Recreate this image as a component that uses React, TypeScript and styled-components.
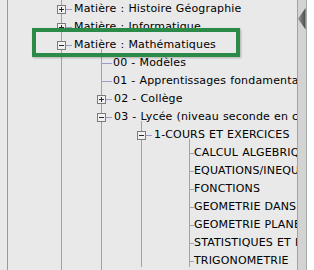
import React from 'react';
import styled, { createGlobalStyle } from 'styled-components';

const LINE = '#9d9dc8';

const Global = createGlobalStyle`
  html, body { margin: 0; padding: 0; background: #e9e9e9; }
  body { font-family: "DejaVu Sans", Verdana, sans-serif; }
`;

const Frame = styled.div`
  position: relative;
  display: flex;
  width: 314px;
  height: 270px;
  overflow: hidden;
  background: #e9e9e9;
`;

const Gutter = styled.div`
  flex: none;
  width: 7px;
`;

const Panel = styled.div`
  flex: none;
  box-sizing: border-box;
  width: 291px;
  height: 270px;
  border-left: 1px solid #9a9a9a;
  border-right: 1px solid #a2a2a2;
  overflow: hidden;
`;

const ScrollStrip = styled.div`
  flex: none;
  box-sizing: border-box;
  width: 9px;
  height: 270px;
  background: #d3d3d3;
  border-right: 1px solid #a9a9a9;
  padding-top: 8px;
`;

const WhiteEdge = styled.div`
  flex: 1;
  background: #ffffff;
`;

const Group = styled.div<{ $x: number; $cut?: number; $lift?: number }>`
  margin-top: ${(p) => -(p.$lift ?? 0)}px;
  padding-top: ${(p) => p.$lift ?? 0}px;
  background-image: linear-gradient(${LINE}, ${LINE});
  background-repeat: no-repeat;
  background-position: ${(p) => p.$x}px 0;
  background-size: 1px calc(100% - ${(p) => p.$cut ?? 0}px);
`;

const Row = styled.div<{ $indent: number }>`
  display: flex;
  align-items: center;
  height: 18px;
  padding-left: ${(p) => p.$indent}px;
  white-space: nowrap;
`;

const Toggle = styled.span`
  flex: none;
  box-sizing: border-box;
  width: 9px;
  height: 9px;
  border: 1px solid #7b7b7b;
  background: #f1f1f1;
  display: flex;
  align-items: center;
  justify-content: center;
`;

const Dash = styled.span<{ $w: number; $gap: number }>`
  flex: none;
  width: ${(p) => p.$w}px;
  height: 1px;
  margin-right: ${(p) => p.$gap}px;
  background: ${LINE};
`;

const Label = styled.span`
  font-size: 11px;
  line-height: 18px;
  letter-spacing: 0.15px;
  word-spacing: 0.4px;
  color: #000;
`;

const Highlight = styled.div`
  position: absolute;
  left: 32px;
  top: 28px;
  width: 208px;
  height: 29px;
  box-sizing: border-box;
  border: 4px solid #2b8a47;
  box-shadow: 1px 1px 2px rgba(0, 0, 0, 0.25);
  pointer-events: none;
`;

const LINE_X = [53, 93, 133, 181];

type Kind = 'plus' | 'minus' | 'leaf';

const Sign = ({ kind }: { kind: Kind }) => (
  <svg width="7" height="7" viewBox="0 0 7 7">
    <rect x="1" y="3" width="5" height="1" fill="#2a2a2a" />
    {kind === 'plus' && <rect x="3" y="1" width="1" height="5" fill="#2a2a2a" />}
  </svg>
);

const BoxRow = ({ level, kind, label }: { level: number; kind: Kind; label: string }) => (
  <Row $indent={LINE_X[level] - 4}>
    <Toggle>
      <Sign kind={kind} />
    </Toggle>
    <Dash $w={6} $gap={2} />
    <Label>{label}</Label>
  </Row>
);

const LeafRow = ({ level, label, dash, gap }: { level: number; label: string; dash: number; gap: number }) => (
  <Row $indent={LINE_X[level]}>
    <Dash $w={dash} $gap={gap} />
    <Label>{label}</Label>
  </Row>
);

const leaves = [
  'CALCUL ALGEBRIQUE',
  'EQUATIONS/INEQUATIONS',
  'FONCTIONS',
  "GEOMETRIE DANS L'ESPACE",
  'GEOMETRIE PLANE',
  'STATISTIQUES ET PROBABILITES',
  'TRIGONOMETRIE',
];

const Arrow = () => (
  <svg width="8" height="22" viewBox="0 0 8 22">
    <defs>
      <linearGradient id="arrowGrad" x1="0" y1="0" x2="1" y2="0">
        <stop offset="0" stopColor="#9a9a9a" />
        <stop offset="1" stopColor="#4a4a4a" />
      </linearGradient>
    </defs>
    <polygon points="7.5,0 7.5,21.5 0,10.75" fill="url(#arrowGrad)" />
  </svg>
);

export default function App() {
  return (
    <>
      <Global />
      <Frame>
        <Gutter />
        <Panel>
          <Group $x={LINE_X[0]}>
            <BoxRow level={0} kind="plus" label="Matière : Histoire Géographie" />
            <BoxRow level={0} kind="plus" label="Matière : Informatique" />
            <BoxRow level={0} kind="minus" label="Matière : Mathématiques" />
            <Group $x={LINE_X[1]} $lift={5}>
              <LeafRow level={1} label="00 - Modèles" dash={11} gap={1} />
              <LeafRow level={1} label="01 - Apprentissages fondamentaux" dash={11} gap={1} />
              <BoxRow level={1} kind="plus" label="02 - Collège" />
              <BoxRow level={1} kind="minus" label="03 - Lycée (niveau seconde en classe)" />
              <Group $x={LINE_X[2]} $lift={5} $cut={3}>
                <BoxRow level={2} kind="minus" label="1-COURS ET EXERCICES" />
                <Group $x={LINE_X[3]} $lift={5} $cut={3}>
                  {leaves.map((l) => (
                    <LeafRow key={l} level={3} label={l} dash={5} gap={0} />
                  ))}
                </Group>
              </Group>
            </Group>
          </Group>
        </Panel>
        <ScrollStrip>
          <Arrow />
        </ScrollStrip>
        <WhiteEdge />
        <Highlight />
      </Frame>
    </>
  );
}
